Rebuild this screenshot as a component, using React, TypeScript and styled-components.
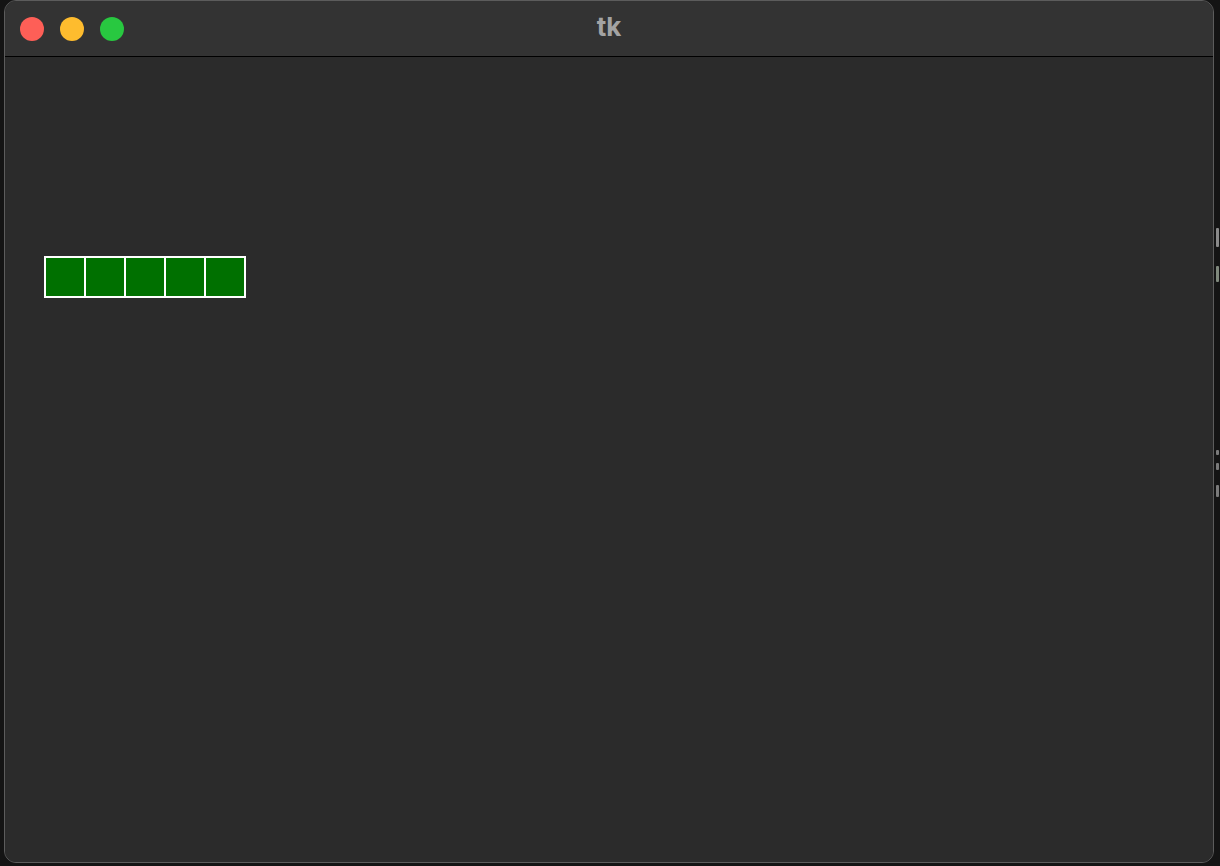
import React from "react";
import styled, { createGlobalStyle } from "styled-components";

const GlobalStyle = createGlobalStyle`
  html, body {
    margin: 0;
    padding: 0;
    background: #141414;
    font-family: Inter, "Liberation Sans", Arial, sans-serif;
  }
`;

const Desktop = styled.div`
  position: relative;
  width: 1220px;
  height: 866px;
  overflow: hidden;
  background: #141414;
  display: flex;
  padding-left: 4px;
  box-sizing: border-box;
`;

// bits of another window peeking out on the right
const Behind = styled.div`
  position: absolute;
  left: 1216px;
  top: 0;
  width: 4px;
  height: 866px;
`;

const Fragment = styled.div<{ $top: number; $h: number; $color: string }>`
  position: absolute;
  left: 0;
  top: ${(p) => p.$top}px;
  width: 3px;
  height: ${(p) => p.$h}px;
  background: ${(p) => p.$color};
  border-radius: 1px;
`;

const Window = styled.div`
  width: 1210px;
  height: 863px;
  box-sizing: border-box;
  border: 1px solid #5c5c5c;
  border-radius: 12px;
  overflow: hidden;
  display: flex;
  flex-direction: column;
  background: #2b2b2b;
`;

const TitleBar = styled.div`
  position: relative;
  height: 55px;
  flex: none;
  background: #333333;
  border-bottom: 1px solid #000;
  display: flex;
  align-items: center;
  padding-left: 15px;
  gap: 16px;
`;

const Light = styled.span<{ $color: string }>`
  width: 24px;
  height: 24px;
  border-radius: 50%;
  background: ${(p) => p.$color};
`;

const Title = styled.div`
  position: absolute;
  left: 0;
  right: 0;
  top: 0;
  height: 55px;
  line-height: 52px;
  text-align: center;
  font-size: 26px;
  font-weight: 700;
  color: #a3a3a3;
  pointer-events: none;
`;

const Content = styled.div`
  flex: 1;
  padding: 199px 0 0 39px;
  background: #2b2b2b;
`;

const Row = styled.div`
  display: flex;
`;

const Cell = styled.div<{ $first: boolean }>`
  width: 38px;
  height: 38px;
  background: #007000;
  border: 2px solid #ffffff;
  margin-left: ${(p) => (p.$first ? 0 : -2)}px;
`;

export default function App() {
  return (
    <>
      <GlobalStyle />
      <Desktop>
        <Behind>
          <Fragment $top={228} $h={19} $color="#8a8a8a" />
          <Fragment $top={266} $h={16} $color="#7f887c" />
          <Fragment $top={450} $h={5} $color="#7a7a7a" />
          <Fragment $top={463} $h={7} $color="#7a7a7a" />
          <Fragment $top={485} $h={12} $color="#7a7a7a" />
        </Behind>
        <Window>
          <TitleBar>
            <Light $color="#fe5f57" />
            <Light $color="#febc2e" />
            <Light $color="#28c840" />
            <Title>tk</Title>
          </TitleBar>
          <Content>
            <Row>
              {[0, 1, 2, 3, 4].map((i) => (
                <Cell key={i} $first={i === 0} />
              ))}
            </Row>
          </Content>
        </Window>
      </Desktop>
    </>
  );
}
